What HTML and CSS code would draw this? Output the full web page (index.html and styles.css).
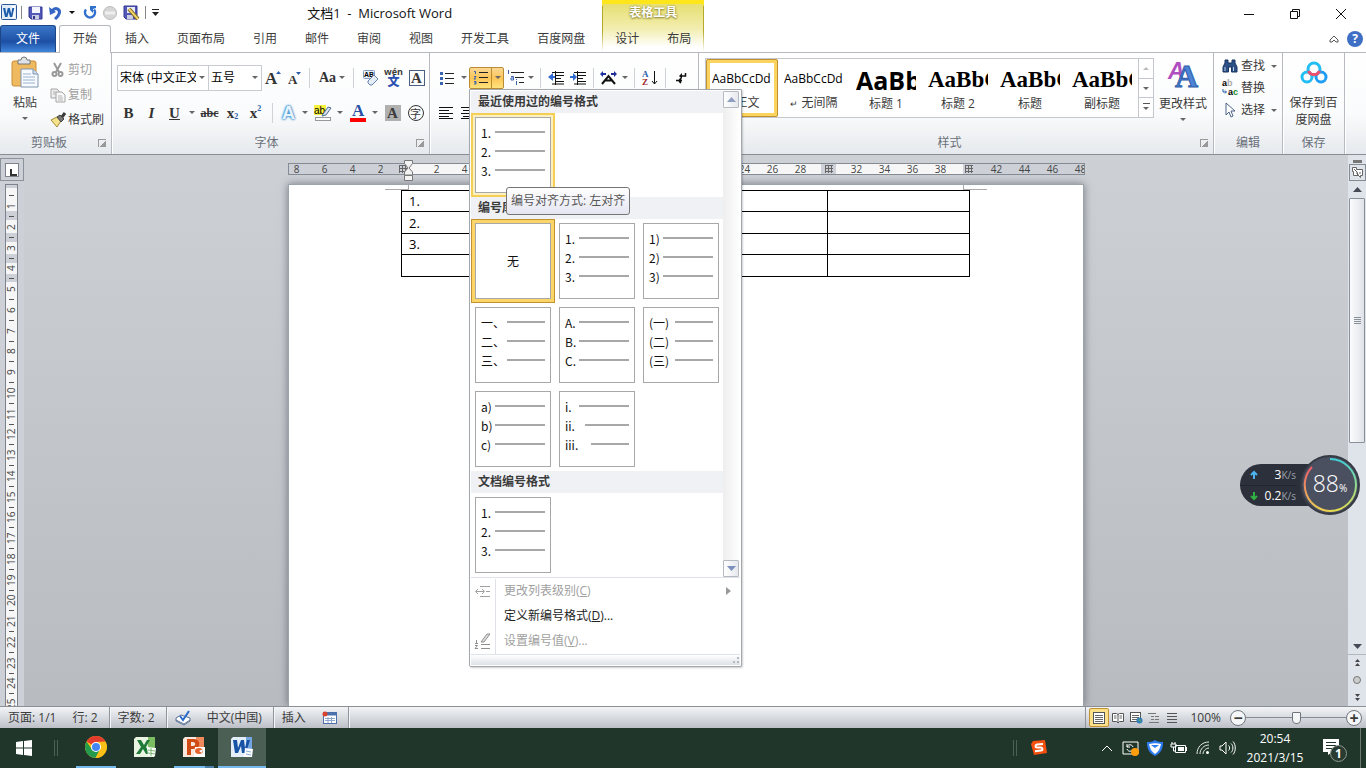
FILE: index.html
```html
<!DOCTYPE html>
<html lang="zh-CN">
<head>
    <meta charset="UTF-8">
    <meta name="viewport" content="width=device-width, initial-scale=1.0">
    <title>文档1 - Microsoft Word</title>
    <link rel="stylesheet" href="styles.css">
</head>

<body>
    <header class="header">
        <div class="quick-row">
            <div class="quick-access">
                <svg class="app-icon" width="17" height="17" viewBox="0 0 17 17"><rect x="0.5" y="0.5" width="15" height="15" rx="1" fill="#e3edf8" stroke="#2b579a"/><rect x="11" y="2" width="3" height="12" fill="#fff"/><path d="M2 4h2.300l1 6 1.500-6h2l1.500 6 1-6h2l-2 9h-2.300l-1.300-5-1.300 5H4z" fill="#1d5cab"/></svg>
                <span class="quick-sep"></span>
                <button class="quick" aria-label="保存"><svg width="16" height="16" viewBox="0 0 16 16"><path d="M1 2h13v12H3l-2-2z" fill="#5257b8" stroke="#33388f"/><rect x="4" y="2" width="8" height="6" fill="#f4f5fc"/><rect x="4" y="10" width="7" height="4" fill="#c9cbe0"/><rect x="5" y="11" width="2" height="3" fill="#33388f"/></svg></button>
                <button class="quick" aria-label="撤消"><svg width="16" height="16" viewBox="0 0 16 16"><path d="M4 6c4-5 9-1 7 3-1 3-3 4-4 5" fill="none" stroke="#3566c4" stroke-width="3"/><path d="M1 2l1 8 6-3z" fill="#3566c4"/></svg></button>
                <span class="caret dark"></span>
                <button class="quick redo" aria-label="恢复"><svg width="16" height="16" viewBox="0 0 16 16"><path d="M4 4.500a5 5 0 1 0 8 0" fill="none" stroke="#3270ce" stroke-width="2.500"/><path d="M8 1h6v2l-3 1v4L8 5z" fill="#3270ce"/></svg></button>
                <button class="quick" aria-label="状态"><svg width="16" height="16" viewBox="0 0 16 16"><circle cx="8" cy="8" r="6.500" fill="#d6d6d6" stroke="#bdbdbd"/><path d="M3 8h10" stroke="#efefef" stroke-width="3"/></svg></button>
                <button class="quick edit" aria-label="另存为"><svg width="18" height="16" viewBox="0 0 18 16"><path d="M1 1h13v13H3l-2-2z" fill="#5257b8" stroke="#33388f"/><rect x="4" y="2" width="8" height="6" fill="#e8eaf7"/><rect x="4" y="10" width="6" height="4" fill="#c9cbe0"/><path d="M6 4l9 10" stroke="#7b6520" stroke-width="4"/><path d="M6 4l9 10" stroke="#f0d264" stroke-width="2"/></svg></button>
                <span class="quick-sep"></span>
                <button class="quick more" aria-label="自定义快速访问工具栏"><svg width="9" height="8" viewBox="0 0 9 8"><path d="M1 .5h7" stroke="#222"/><path d="M1 3h7L4.500 7z" fill="#222"/></svg></button>
            </div>
            <h1 class="title">文档1&nbsp; -&nbsp; Microsoft Word</h1>
        </div>

        <nav class="tabs">
            <a class="file-tab" href="#">文件</a>
            <a class="tab active" href="#">开始</a>
            <a class="tab" href="#">插入</a>
            <a class="tab" href="#">页面布局</a>
            <a class="tab" href="#">引用</a>
            <a class="tab" href="#">邮件</a>
            <a class="tab" href="#">审阅</a>
            <a class="tab" href="#">视图</a>
            <a class="tab" href="#">开发工具</a>
            <a class="tab" href="#">百度网盘</a>
        </nav>

        <div class="context-tabs">
            <span class="context-title">表格工具</span>
            <div class="context-links">
                <a href="#">设计</a>
                <a href="#">布局</a>
            </div>
        </div>

        <div class="window-buttons">
            <button aria-label="最小化"><svg width="12" height="12" viewBox="0 0 12 12"><path d="M1 6.500h10" stroke="#111"/></svg></button>
            <button aria-label="还原"><svg width="12" height="12" viewBox="0 0 12 12"><path d="M1.500 3.500h7v7h-7zM3.500 3V1.500h7v7H9" fill="none" stroke="#111"/></svg></button>
            <button aria-label="关闭"><svg width="12" height="12" viewBox="0 0 12 12"><path d="M1 1l10 10M11 1L1 11" stroke="#111"/></svg></button>
        </div>
        <div class="help-row">
            <button aria-label="功能区最小化"><svg width="10" height="8" viewBox="0 0 10 8"><path d="M1 5l4-4 4 4v2H7L5 5 3 7H1z" fill="#fff" stroke="#555"/></svg></button>
            <button class="help" aria-label="帮助">?</button>
        </div>
    </header>

    <section class="ribbon">
        <div class="group clipboard">
            <div class="group-body">
                <button class="big">
                    <svg width="28" height="32" viewBox="0 0 28 32"><rect x="1" y="4" width="24" height="25" rx="2" fill="#efb95f" stroke="#c98f36"/><path d="M7 7V3h3a3 3 0 0 1 6 0h3v4z" fill="#dfe3e8" stroke="#777"/><path d="M10 12h12l5 5v13H10z" fill="#f7fbff" stroke="#7e94ae"/><path d="M22 12v5h5" fill="#cddcee" stroke="#7e94ae"/><path d="M12 17h8M12 20h12M12 23h12M12 26h12" stroke="#9db2cb"/></svg>
                    <span>粘贴</span>
                    <span class="caret"></span>
                </button>
                <div class="stack">
                    <button class="small" disabled><svg width="16" height="16" viewBox="0 0 16 16"><path d="M4 1l5 9M11 1L6 10" stroke="#9a9a9a" stroke-width="2"/><circle cx="4.500" cy="12" r="2" fill="none" stroke="#9a9a9a" stroke-width="2"/><circle cx="10.500" cy="12" r="2" fill="none" stroke="#9a9a9a" stroke-width="2"/></svg>剪切</button>
                    <button class="small" disabled><svg width="16" height="16" viewBox="0 0 16 16"><path d="M1 2h6l2 2v7H1z" fill="#eee" stroke="#a5a5a5"/><path d="M6 5h6l3 3v7H6z" fill="#f7f7f7" stroke="#a5a5a5"/><path d="M3 5h3M3 7h3M8 9h4M8 11h5M8 13h5" stroke="#b5b5b5"/></svg>复制</button>
                    <button class="small"><svg width="16" height="16" viewBox="0 0 16 16"><path d="M1 8l6-3 4 4-4 6z" fill="#f5e28a" stroke="#a38b35"/><path d="M7 5l3-2 4 4-3 3z" fill="#777" stroke="#444"/><path d="M12 5l3-4" stroke="#3b3b3b" stroke-width="3"/></svg>格式刷</button>
                </div>
            </div>
            <div class="group-label">剪贴板<i class="launcher"></i></div>
        </div>

        <div class="group font">
            <div class="group-body rows">
                <div class="tool-row">
                    <label class="combo name"><select aria-label="字体"><option>宋体 (中文正文)</option></select><span class="caret"></span></label>
                    <label class="combo size"><select aria-label="字号"><option>五号</option></select><span class="caret"></span></label>
                    <button class="tool narrow" aria-label="增大字体"><svg width="16" height="16" viewBox="0 0 16 16"><text x="0" y="14" class="glyph-lg">A</text><path d="M11 4h5l-2.500-3z" fill="#2a5caa"/></svg></button>
                    <button class="tool narrow" aria-label="缩小字体"><svg width="16" height="16" viewBox="0 0 16 16"><text x="2" y="14" class="glyph-sm">A</text><path d="M10 2h5l-2.500 3z" fill="#2a5caa"/></svg></button>
                    <span class="sep"></span>
                    <button class="tool narrow serif case" aria-label="更改大小写">Aa</button><span class="caret"></span>
                    <span class="sep"></span>
                    <button class="tool" aria-label="清除格式"><svg width="18" height="18" viewBox="0 0 18 18"><rect x="1.500" y="1.500" width="11" height="8" rx="1" fill="#e9f0fa" stroke="#7d9ac4"/><text x="2" y="8" class="glyph-xs">AB</text><path d="M6 12l6-6 4 4-6 6H8l-2-2z" fill="#e4ecf6" stroke="#6482ad"/></svg></button>
                    <button class="tool pinyin" aria-label="拼音指南"><span>wén</span><b>文</b></button>
                    <button class="tool" aria-label="字符边框"><span class="boxed">A</span></button>
                </div>
                <div class="tool-row">
                    <button class="tool serif" aria-label="加粗">B</button>
                    <button class="tool serif italic" aria-label="倾斜">I</button>
                    <button class="tool serif underline" aria-label="下划线">U</button><span class="caret"></span>
                    <button class="tool serif strike" aria-label="删除线">abc</button>
                    <button class="tool serif" aria-label="下标">x<sub>2</sub></button>
                    <button class="tool serif" aria-label="上标">x<sup>2</sup></button>
                    <span class="sep"></span>
                    <button class="tool narrow effects" aria-label="文本效果">A</button><span class="caret"></span>
                    <button class="tool" aria-label="突出显示"><svg width="18" height="18" viewBox="0 0 18 18"><rect x="0" y="1" width="12" height="10" fill="#f8f23c"/><text x="0" y="10" class="glyph-ab">ab</text><path d="M9 10l5-7 3 1-5 7-4 1z" fill="#d7e2f0" stroke="#4e6a91"/><rect x="1.500" y="13.500" width="15" height="3" fill="#fff" stroke="#999"/></svg></button><span class="caret"></span>
                    <button class="tool" aria-label="字体颜色"><svg width="18" height="18" viewBox="0 0 18 18"><text x="3" y="12" class="glyph-blue">A</text><rect x="1" y="14" width="16" height="4" fill="#f00"/></svg></button><span class="caret"></span>
                    <button class="tool" aria-label="字符底纹"><span class="shaded">A</span></button>
                    <button class="tool" aria-label="带圈字符"><span class="circled">字</span></button>
                </div>
            </div>
            <div class="group-label">字体<i class="launcher"></i></div>
        </div>

        <div class="group paragraph">
            <div class="group-body rows">
                <div class="tool-row">
                    <button class="tool bullets" aria-label="项目符号"><svg width="14" height="14" viewBox="0 0 14 14"><path d="M0 1h3v3H0zM0 6h3v3H0zM0 11h3v3H0z" fill="#3a64b0"/><path d="M5 2.500h9M5 7.500h9M5 12.500h9" stroke="#222"/></svg></button><span class="caret"></span>
                    <div class="split">
                        <button class="split-main" aria-label="编号"><svg width="15" height="15" viewBox="0 0 15 15"><path d="M1 1.500h1.500V4M1 6.500h2L1 9h2M1 11.500h2V14H1M1.500 12.800H3" fill="none" stroke="#3a64b0"/><path d="M6 2.500h9M6 7.500h9M6 12.500h9" stroke="#222"/></svg></button>
                        <button class="split-arrow" aria-label="编号选项" aria-expanded="true"><span class="caret"></span></button>

                        <div class="menu">
                            <div class="menu-scroll">
                                <div class="gallery">
                                    <h2>最近使用过的编号格式</h2>
                                    <div class="cells">
                                        <div class="cell-wrap">
                                            <button class="cell hover"><span>1.</span><span>2.</span><span>3.</span></button>
                                            <div class="tooltip" role="tooltip">编号对齐方式: 左对齐</div>
                                        </div>
                                    </div>
                                    <h2>编号库</h2>
                                    <div class="cells">
                                        <button class="cell none">无</button>
                                        <button class="cell"><span>1.</span><span>2.</span><span>3.</span></button>
                                        <button class="cell"><span>1)</span><span>2)</span><span>3)</span></button>
                                        <button class="cell wide"><span>一、</span><span>二、</span><span>三、</span></button>
                                        <button class="cell"><span>A.</span><span>B.</span><span>C.</span></button>
                                        <button class="cell wide"><span>(一)</span><span>(二)</span><span>(三)</span></button>
                                        <button class="cell"><span>a)</span><span>b)</span><span>c)</span></button>
                                        <button class="cell roman"><span>i.</span><span>ii.</span><span>iii.</span></button>
                                    </div>
                                    <h2>文档编号格式</h2>
                                    <div class="cells">
                                        <button class="cell"><span>1.</span><span>2.</span><span>3.</span></button>
                                    </div>
                                </div>
                                <div class="menu-bar">
                                    <button aria-label="向上滚动"><svg width="9" height="5" viewBox="0 0 9 5"><path d="M0 5h9L4.500 0z" fill="#8f9dc0"/></svg></button>
                                    <button aria-label="向下滚动"><svg width="9" height="5" viewBox="0 0 9 5"><path d="M0 0h9L4.500 5z" fill="#7d8fbd"/></svg></button>
                                </div>
                            </div>
                            <div class="commands">
                                <button disabled><i><svg width="16" height="12" viewBox="0 0 16 12"><path d="M5 1.500h10M11 6.500h4M5 11.500h10M1 6.500h8M3 4L0.500 6.500 3 9M7 4l2.500 2.500L7 9" fill="none" stroke="#a0a0a0"/></svg></i>更改列表级别(<u>C</u>)<svg class="submenu" width="5" height="8" viewBox="0 0 5 8"><path d="M0 0v8l5-4z" fill="#999"/></svg></button>
                                <button><i></i>定义新编号格式(<u>D</u>)...</button>
                                <button disabled><i><svg width="16" height="16" viewBox="0 0 16 16"><path d="M1.500 7v3M0 10.500h3M0 12.500h2.500L0 15.500h3M6 11.500h9M6 15.500h9" fill="none" stroke="#909090"/><path d="M6 9l6-8h3L9 9z" fill="#ddd" stroke="#909090"/></svg></i>设置编号值(<u>V</u>)...</button>
                            </div>
                            <div class="grip"><svg width="8" height="8" viewBox="0 0 8 8"><path d="M5 1h2v2H5zM1 5h2v2H1zM5 5h2v2H5z" fill="#b5bac2"/></svg></div>
                        </div>
                    </div>
                    <button class="tool multi" aria-label="多级列表"><svg width="17" height="15" viewBox="0 0 17 15"><path d="M1.500 0v4M4 6.500h2.500V10H4V8h2M9.500 11v4M9.500 9v1" fill="none" stroke="#3a64b0"/><path d="M4 2.500h13M8 7.500h9M12 12.500h5" stroke="#222"/></svg></button><span class="caret"></span>
                    <span class="sep"></span>
                    <button class="tool" aria-label="减少缩进量"><svg width="16" height="14" viewBox="0 0 16 14"><path d="M4 1.500h12M7 4.500h9M7 7.500h6M7 10.500h9M4 13h12M7.500 0v14" stroke="#111"/><path d="M0 6l5-4v3h2v2H5v3z" fill="#2f6bd0"/></svg></button>
                    <button class="tool" aria-label="增加缩进量"><svg width="16" height="14" viewBox="0 0 16 14"><path d="M4 1.500h12M7 4.500h9M7 7.500h6M7 10.500h9M4 13h12M7.500 0v14" stroke="#111"/><path d="M7 6L3 2v3H0v2h3v3z" fill="#2f6bd0"/></svg></button>
                    <span class="sep"></span>
                    <button class="tool" aria-label="中文版式"><svg width="18" height="14" viewBox="0 0 18 14"><path d="M2 13l6.500-8L15 13M5 9.500h7" fill="none" stroke="#111" stroke-width="2"/><path d="M0 3l3-3v2h3v2H3v2zM17 3l-3-3v2h-3v2h3v2z" fill="#1c2f9a"/></svg></button><span class="caret"></span>
                    <span class="sep"></span>
                    <button class="tool" aria-label="排序"><svg width="16" height="16" viewBox="0 0 16 16"><text x="0" y="7" class="glyph-sort a">A</text><text x="0" y="15" class="glyph-sort z">Z</text><path d="M12.500 1v13M10 11l2.500 3 2.500-3" fill="none" stroke="#111"/></svg></button>
                    <span class="sep"></span>
                    <button class="tool" aria-label="显示编辑标记"><svg width="12" height="14" viewBox="0 0 12 14"><path d="M10.500 2v3H6M1 9.500h6M5.500 7v5" fill="none" stroke="#111" stroke-width="1.500"/><path d="M4 5l3-3v6zM3 9.500L5.500 7v6z" fill="#111"/></svg></button>
                </div>
                <div class="tool-row">
                    <button class="tool" aria-label="左对齐"><svg width="14" height="12" viewBox="0 0 14 12"><path d="M0 .5h14M0 3.500h10M0 6.500h14M0 9.500h10M0 11.500h14" stroke="#111"/></svg></button>
                    <button class="tool" aria-label="居中"><svg width="14" height="12" viewBox="0 0 14 12"><path d="M0 .5h14M2 3.500h10M0 6.500h14M2 9.500h10M0 11.500h14" stroke="#111"/></svg></button>
                </div>
            </div>
            <div class="group-label"></div>
        </div>

        <div class="group styles">
            <div class="group-body">
                <div class="style-gallery">
                    <button class="style selected"><span class="preview">AaBbCcDd</span><span><small>↵</small> 正文</span></button>
                    <button class="style"><span class="preview">AaBbCcDd</span><span><small>↵</small> 无间隔</span></button>
                    <button class="style"><span class="preview heading1">AaBb</span><span>标题 1</span></button>
                    <button class="style"><span class="preview heading">AaBbC</span><span>标题 2</span></button>
                    <button class="style"><span class="preview heading">AaBbC</span><span>标题</span></button>
                    <button class="style"><span class="preview heading">AaBbC</span><span>副标题</span></button>
                    <div class="style-scroll">
                        <button disabled aria-label="上一行"><span class="caret up"></span></button>
                        <button aria-label="下一行"><span class="caret"></span></button>
                        <button class="all" aria-label="其他"><span class="caret"></span></button>
                    </div>
                </div>
                <button class="big">
                    <svg width="30" height="32" viewBox="0 0 30 32"><text x="0" y="21" class="glyph-purple">A</text><text x="7" y="29" class="glyph-styles">A</text></svg>
                    <span>更改样式</span>
                    <span class="caret"></span>
                </button>
            </div>
            <div class="group-label">样式<i class="launcher"></i></div>
        </div>

        <div class="group editing">
            <div class="group-body">
                <div class="stack">
                    <button class="small"><svg width="16" height="14" viewBox="0 0 16 14"><path d="M3 1h3v3h4V1h3v3l2 4v5H9.500V8h-3v5H1V8l2-4z" fill="#2d5187" stroke="#19345f"/><path d="M3 8v4M11.500 8v4" stroke="#b5cae8"/></svg>查找<span class="caret"></span></button>
                    <button class="small"><svg width="16" height="16" viewBox="0 0 16 16"><text x="0" y="6" class="glyph-rep">a<tspan class="pale">b</tspan></text><text x="6" y="15" class="glyph-rep">a<tspan class="green">c</tspan></text><path d="M1 9v3h3M3 10.500l1.500 1.500L3 13.500" fill="none" stroke="#2a5caa"/></svg>替换</button>
                    <button class="small"><svg width="16" height="16" viewBox="0 0 16 16"><path d="M4 1v12l3-3 2 5 2-1-2-5h4z" fill="#fff" stroke="#4c6388"/></svg>选择<span class="caret"></span></button>
                </div>
            </div>
            <div class="group-label">编辑</div>
        </div>

        <div class="group cloud">
            <div class="group-body">
                <button class="big">
                    <svg width="28" height="32" viewBox="0 0 28 32"><circle cx="14" cy="12" r="6" fill="none" stroke="#22bdf2" stroke-width="3"/><circle cx="7" cy="20" r="5" fill="none" stroke="#22bdf2" stroke-width="3"/><circle cx="21" cy="20" r="5" fill="none" stroke="#1e9df2" stroke-width="3"/><path d="M8.500 14a6 6 0 0 0 11 0" fill="none" stroke="#f0506e" stroke-width="3"/></svg>
                    <span>保存到百<br>度网盘</span>
                </button>
            </div>
            <div class="group-label">保存</div>
        </div>
    </section>

    <main class="workspace">
        <div class="left-rail">
            <button class="tab-stop" aria-label="制表符"><span></span></button>
            <div class="v-ruler">
                <span>1</span><span>2</span><span>3</span><span>4</span><span>5</span><span>6</span><span>7</span><span>8</span><span>9</span><span>10</span><span>11</span><span>12</span><span>13</span><span>14</span><span>15</span><span>16</span><span>17</span><span>18</span><span>19</span><span>20</span><span>21</span><span>22</span><span>23</span><span>24</span><span>25</span>
            </div>
        </div>

        <div class="canvas">
            <div class="h-ruler-wrap">
                <div class="h-ruler">
                    <span>8</span><span>6</span><span>4</span><span>2</span><span class="mark"></span><span>2</span><span>4</span><span>6</span><span>8</span><span>10</span><span>12</span><span>14</span><span>16</span><span>18</span><span>20</span><span>22</span><span>24</span><span>26</span><span>28</span><span class="mark"></span><span>32</span><span>34</span><span>36</span><span>38</span><span class="mark"></span><span>42</span><span>44</span><span>46</span><span>48</span>
                </div>
                <svg class="indent" width="9" height="21" viewBox="0 0 9 21"><path d="M.5.5h8v3L5 8l3.500 4v3h-8v-3L4 8 .5 3.500zM.5 15.500h8v5h-8z" fill="#f3f3f3" stroke="#777"/></svg>
            </div>
            <div class="page">
                <div class="crop-marks"><span></span><span></span></div>
                <table class="doc-table">
                    <tr><td>1.</td><td></td><td></td><td></td></tr>
                    <tr><td>2.</td><td></td><td></td><td></td></tr>
                    <tr><td>3.</td><td></td><td></td><td></td></tr>
                    <tr><td></td><td></td><td></td><td></td></tr>
                </table>
            </div>
        </div>

        <div class="right-rail">
            <span class="splitter"></span>
            <button class="ruler-toggle" aria-label="标尺"><svg width="13" height="13" viewBox="0 0 13 13"><path d="M1.500 1.500h4v2h6v6h-2v2l-2-2h-5v-4h-1z" fill="#fff" stroke="#666"/><path d="M3 3l3 3M6 6v2l2 2M9 6v2" stroke="#666"/></svg></button>
            <button class="scroll-up" aria-label="向上"><svg width="9" height="5" viewBox="0 0 9 5"><path d="M0 5h9L4.500 0z" fill="#444a55"/></svg></button>
            <div class="scroll-track"><div class="scroll-thumb"></div></div>
            <button aria-label="向下"><svg width="9" height="5" viewBox="0 0 9 5"><path d="M0 0h9L4.500 5z" fill="#444a55"/></svg></button>
            <div class="browse">
                <button aria-label="上一页"><svg width="7" height="8" viewBox="0 0 7 8"><path d="M1 3h5L3.500 0zM1 7h5L3.500 4z" fill="#444"/></svg></button>
                <button aria-label="选择浏览对象"><svg width="8" height="8" viewBox="0 0 8 8"><circle cx="4" cy="4" r="3.500" fill="#ccc" stroke="#777"/></svg></button>
                <button aria-label="下一页"><svg width="7" height="8" viewBox="0 0 7 8"><path d="M1 1h5L3.500 4zM1 5h5L3.500 8z" fill="#444"/></svg></button>
            </div>
        </div>

        <!-- network / memory monitor floating over the document -->
        <div class="monitor">
            <div class="speeds">
                <p><svg width="8" height="8" viewBox="0 0 8 8"><path d="M4 8V2M1 4l3-3 3 3" fill="none" stroke="#4db4f0" stroke-width="2"/></svg><b>3</b>K/s</p>
                <p><svg width="8" height="8" viewBox="0 0 8 8"><path d="M4 0v6M1 4l3 3 3-3" fill="none" stroke="#31b043" stroke-width="2"/></svg><b>0.2</b>K/s</p>
            </div>
            <div class="gauge">
                <svg width="60" height="60" viewBox="0 0 60 60">
                    <defs><linearGradient id="ring" x1="0" y1="0" x2="0" y2="1"><stop offset="0" stop-color="#3fd0d8"/><stop offset="0.500" stop-color="#8fdc90"/><stop offset="1" stop-color="#e6dc50"/></linearGradient><linearGradient id="warm" x1="0" y1="0" x2="0" y2="1"><stop offset="0" stop-color="#ee5a6c"/><stop offset="1" stop-color="#ecd14f"/></linearGradient></defs>
                    <circle cx="30" cy="30" r="29" fill="#4b5060" stroke="#363a45" stroke-width="2"/>
                    <path d="M30 4a26 26 0 0 1 0 52" fill="none" stroke="url(#ring)" stroke-width="2"/>
                    <path d="M30 56A26 26 0 0 1 12 12" fill="none" stroke="url(#warm)" stroke-width="2"/>
                </svg>
                <span>88<small>%</small></span>
            </div>
        </div>
    </main>

    <footer class="status-bar">
        <span class="status">页面: 1/1</span>
        <span class="status end">行: 2</span>
        <span class="status end">字数: 2</span>
        <span class="status"><svg width="16" height="16" viewBox="0 0 16 16"><path d="M1 8l5-3 9 3v3l-6 4-8-4z" fill="#fff" stroke="#5c7396"/><path d="M1 10l8 4 6-4" fill="none" stroke="#5c7396"/><path d="M5 6l3 4 6-9" fill="none" stroke="#2b6acb" stroke-width="2"/></svg></span>
        <span class="status end">中文(中国)</span>
        <span class="status">插入</span>
        <span class="status end"><svg width="15" height="13" viewBox="0 0 15 13"><rect x="1.500" y="1.500" width="13" height="11" fill="#fff" stroke="#4b70ab"/><path d="M2 3h12" stroke="#4b70ab" stroke-width="3"/><path d="M3 7.500h10M3 9.500h10M6 6v6M9.500 6v6" stroke="#8ca6cf"/><circle cx="3" cy="3" r="2.500" fill="#d8432e"/></svg></span>
        <div class="views">
            <button class="current" aria-label="页面视图"><svg width="12" height="12" viewBox="0 0 12 12"><rect x=".5" y=".5" width="11" height="11" fill="#fff" stroke="#555"/><path d="M2 3.500h8M2 5.500h8M2 7.500h8M2 9.500h8" stroke="#666"/></svg></button>
            <button aria-label="阅读版式"><svg width="12" height="12" viewBox="0 0 12 12"><path d="M.5 1.500h4l1.500 1 1.500-1h4v8h-4L6 11 4.500 9.500h-4zM6 2v9" fill="#fff" stroke="#555"/><path d="M2 4h2.500M2 6h2.500M7.500 4H10M7.500 6H10" stroke="#666"/></svg></button>
            <button aria-label="Web 版式"><svg width="13" height="12" viewBox="0 0 13 12"><rect x=".5" y=".5" width="10" height="9" fill="#fff" stroke="#555"/><path d="M2 3.500h7M2 5.500h7M2 7.500h5" stroke="#666"/><circle cx="9.500" cy="8.500" r="3" fill="#2f7db8"/><path d="M8 8l2-1 1 3z" fill="#59b35a"/></svg></button>
            <button aria-label="大纲视图"><svg width="12" height="12" viewBox="0 0 12 12"><path d="M0 1.500h8M3 4.500h3M7 4.500h4M3 7.500h3M7 7.500h4M1 10.500h10" stroke="#777"/></svg></button>
            <button aria-label="草稿"><svg width="12" height="12" viewBox="0 0 12 12"><path d="M1 1.500h10M1 4.500h10M1 7.500h10M1 10.500h10" stroke="#555"/></svg></button>
        </div>
        <div class="zoom">
            <span>100%</span>
            <button aria-label="缩小">−</button>
            <input type="range" aria-label="显示比例" min="0" max="100" value="50">
            <button aria-label="放大">+</button>
        </div>
    </footer>

    <footer class="taskbar">
        <button class="start" aria-label="开始"><svg width="16" height="16" viewBox="0 0 16 16"><path d="M0 2l7-1v6.500H0zM8 1l8-1v7.500H8zM0 8.500h7V15l-7-1zM8 8.500h8V16l-8-1z" fill="#fff"/></svg></button>
        <span class="rule"></span>
        <div class="apps">
            <button class="app running" aria-label="Chrome"><svg width="22" height="22" viewBox="0 0 22 22"><circle cx="11" cy="11" r="11" fill="#fbc116"/><path d="M11 11L1.500 5.500A11 11 0 0 1 20.500 5.500L11 6z" fill="#e33b2e"/><path d="M1.500 5.500A11 11 0 0 0 10.500 22L15 13.500H7z" fill="#249a4c"/><path d="M11 6h9.500a11 11 0 0 1-10 16L15.500 13z" fill="#fbc116"/><circle cx="11" cy="11" r="5" fill="#fff"/><circle cx="11" cy="11" r="4" fill="#4285f4"/></svg></button>
            <button class="app" aria-label="Excel"><svg width="22" height="22" viewBox="0 0 22 22"><path d="M2 1h19v19l-1 1H0V3z" fill="#e9f4e3"/><path d="M14 1h7v13h-7z" fill="#7bbd62"/><path d="M3 4h4l3 5 3-5h3l-4 7 4 7h-4l-3-5-3 5H2l5-7z" fill="#207a38"/><path d="M13 11l9 1-1 8h-7z" fill="#fff"/><path d="M14 14l7 1M14 17l7 1M17 12v8" stroke="#78b86c"/></svg></button>
            <button class="app running recent" aria-label="PowerPoint"><svg width="22" height="22" viewBox="0 0 22 22"><path d="M2 1h19v19l-1 1H0V3z" fill="#fbe7dc"/><path d="M13 1h8v13h-8z" fill="#ee8a5c"/><path d="M4 3h7c7 0 7 10 0 10H8v6H4zM8 6v4h2c3 0 3-4 0-4z" fill="#d04a13" fill-rule="evenodd"/><path d="M12 11h10v10H11z" fill="#fff"/><ellipse cx="16" cy="15" rx="4" ry="3" fill="#e4622c"/><path d="M16 15l4-2-1 4z" fill="#fff"/></svg></button>
            <button class="app running active" aria-label="Word"><svg width="22" height="22" viewBox="0 0 22 22"><path d="M2 1h19v19l-1 1H0V3z" fill="#e4eefa"/><path d="M15 1h6v12h-6z" fill="#73a5e0"/><path d="M2 4h4l1 8 3-8h3l1 8 2-8h3l-4 13h-4l-1-7-3 7H4z" fill="#1753a5"/><path d="M14 12l8 1-1 8h-8z" fill="#fff"/><path d="M15 15l5 1M15 18l5 1" stroke="#86acdb"/></svg></button>
        </div>
        <div class="tray">
            <span class="rule"></span>
            <button class="ime" aria-label="搜狗输入法"><svg width="16" height="16" viewBox="0 0 16 16"><path d="M2 1l12-1 2 13-13 2L0 4z" fill="#f4500d"/><path d="M12 4L6 4.500c-2 .5-2 3 0 3h4c2 .5 2 3 0 3l-6 .8" fill="none" stroke="#fff" stroke-width="2"/></svg></button>
            <button aria-label="显示隐藏的图标"><svg width="12" height="8" viewBox="0 0 12 8"><path d="M1 7l5-5 5 5" fill="none" stroke="#fff"/></svg></button>
            <button aria-label="同步"><svg width="18" height="16" viewBox="0 0 18 16"><path d="M1 2h15v12H1zM5 7c1-3 5-3 6 0M5 4v3h3M11 9c-1 3-5 3-6 0" fill="none" stroke="#fff"/><circle cx="13" cy="12" r="4" fill="#ff9d0a"/></svg></button>
            <button aria-label="电脑管家"><svg width="16" height="16" viewBox="0 0 16 16"><path d="M8 0c3 2 5 2 8 2 0 7-2 11-8 14C2 13 0 9 0 2c3 0 5 0 8-2z" fill="#2d7cf0"/><path d="M2 4c5-1 8-1 12 0-1 5-3 8-6 10-3-2-5-5-6-10z" fill="#fff"/><path d="M4 5h8L8 8z" fill="#2d7cf0"/></svg></button>
            <button aria-label="电池"><svg width="18" height="12" viewBox="0 0 18 12"><path d="M5.500 3.500h10v7h-10zM16.500 5v4M1 2h5v3H1zM3.500 5v4h2M2 0v2M5 0v2" fill="none" stroke="#fff"/><rect x="8" y="5" width="6" height="4" fill="#fff"/></svg></button>
            <button aria-label="无线网络"><svg width="14" height="14" viewBox="0 0 14 14"><path d="M1 13C1 6 6 1 13 1M4 13c0-5 4-9 9-9M7 13c0-3 3-6 6-6" fill="none" stroke="#e6ebe8"/><circle cx="11.500" cy="11.500" r="1.500" fill="#fff"/></svg></button>
            <button aria-label="音量"><svg width="17" height="14" viewBox="0 0 17 14"><path d="M1 5h2l4-4v12L3 9H1zM9.500 4.500c1.500 1 1.500 4 0 5M12 2.500c2.500 2 2.500 7 0 9M14 .5c3 3 3 10 0 13" fill="none" stroke="#fff"/></svg></button>
            <time>20:54<br>2021/3/15</time>
            <button class="notice" aria-label="通知"><svg width="24" height="24" viewBox="0 0 24 24"><path d="M0 1h16v13H9l-4 3v-3H0z" fill="#fff"/><path d="M3 4.500h10M3 7.500h10M3 10.500h7" stroke="#20362a"/><circle cx="15.500" cy="15.500" r="8" fill="#293b31" stroke="#8d9992"/><text x="12" y="20" class="badge">1</text></svg></button>
        </div>
    </footer>
</body>
</html>
```

FILE: styles.css
```css
* {
    box-sizing: border-box;
}
body {
    margin: 0;
    height: 100vh;
    display: flex;
    flex-direction: column;
    overflow: hidden;
    font-family: "Open Sans", "Noto Sans CJK SC", sans-serif;
    font-size: 12px;
    line-height: 16px;
    color: #3b3b3b;
    background: #fff;
}
button {
    display: flex;
    align-items: center;
    justify-content: center;
    padding: 0;
    border: 0;
    background: none;
    font: inherit;
    color: inherit;
}
a {
    color: inherit;
    text-decoration: none;
}
svg {
    display: block;
    flex: none;
    overflow: visible;
}

/* small drop-down arrow */
.caret {
    flex: none;
    width: 12px;
}
.caret::before {
    content: "";
    display: block;
    width: 0;
    margin: 0 auto;
    border: 3px solid transparent;
    border-top-color: #666;
    border-bottom: 0;
}
.caret.dark::before {
    border-top-color: #111;
}
.caret.up::before {
    border-top: 0;
    border-bottom: 3px solid #bbb;
}

/* title bar and tabs */
.header {
    display: grid;
    grid-template-columns: auto auto 1fr;
    grid-template-rows: 25px 27px;
    border-bottom: 1px solid #b6babf;
}
.quick-row {
    grid-area: 1 / 1;
    display: flex;
    justify-content: space-between;
    align-items: center;
    padding-right: 150px;
}
.quick-access {
    display: flex;
    align-items: center;
    padding-left: 1px;
}
.quick-sep {
    height: 13px;
    margin: 0 4px 0 3px;
    border-left: 1px solid #888;
}
.quick {
    width: 20px;
}
.redo,
.edit {
    margin-left: 2px;
}
.more {
    width: 10px;
}
.title {
    margin: 0;
    font-size: 13px;
    font-weight: normal;
    color: #111;
}
.tabs {
    grid-area: 2 / 1;
    display: flex;
    padding-right: 3px;
}
.file-tab {
    width: 56px;
    margin-right: 3px;
    text-align: center;
    line-height: 26px;
    color: #fff;
    background: linear-gradient(#3b76c8, #1d50a5 60%, #3f86dc);
    border: 1px solid #1c4687;
    border-bottom: 0;
    border-radius: 3px 3px 0 0;
}
.tab {
    padding: 0 14px;
    line-height: 28px;
}
.tab.active {
    margin-bottom: -1px;
    padding: 0 13px;
    line-height: 26px;
    background: #fff;
    border: 1px solid #b6babf;
    border-bottom: 0;
    border-radius: 3px 3px 0 0;
}
.context-tabs {
    grid-area: 1 / 2 / 3;
    padding: 0 12px;
    border: 1px solid #c9bd2c;
    border-width: 4px 1px 0;
    border-image: linear-gradient(#ffe61a 10%, #b5a92c 12%, #b5a92c 60%, #fff) 4 1 0;
    background: linear-gradient(#e6df72, #f2edad 50%, #fff 90%);
}
.context-title {
    display: block;
    text-align: center;
    line-height: 18px;
    font-weight: bold;
    color: #fff;
    text-shadow: 0 0 2px #8d8430, 0 1px 2px #8d8430;
}
.context-links {
    display: flex;
    gap: 28px;
    line-height: 34px;
}
.window-buttons {
    grid-area: 1 / 3;
    display: flex;
    justify-content: flex-end;
    align-items: center;
    padding: 3px 2px 0 0;
}
.window-buttons button {
    width: 46px;
}
.help-row {
    grid-area: 2 / 3;
    display: flex;
    justify-content: flex-end;
    align-items: center;
    gap: 8px;
    padding-right: 3px;
}
.help {
    width: 16px;
    height: 16px;
    border-radius: 50%;
    background: #3f6fc4;
    color: #fff;
    font-weight: bold;
}

/* ribbon */
.ribbon {
    display: flex;
    height: 102px;
    background: linear-gradient(#fff, #fafbfc 60%, #e6e9ed);
    border-bottom: 1px solid #898e95;
}
.group {
    display: flex;
    flex-direction: column;
    border-right: 1px solid #b7bbc1;
    box-shadow: 1px 0 #fff;
}
.group-body {
    flex: 1;
    display: flex;
    align-items: flex-start;
}
.group-label {
    display: flex;
    justify-content: center;
    height: 19px;
    color: #6a707a;
}
.launcher {
    width: 8px;
    height: 8px;
    margin: 4px 5px 0 auto;
    border: 1px solid #999;
    border-width: 1px 0 0 1px;
    background: linear-gradient(135deg, transparent 50%, #999 50%);
}
.group-label:has(.launcher)::before {
    content: "";
    margin-left: auto;
}
.big {
    flex-direction: column;
    justify-content: flex-start;
    padding-top: 4px;
    line-height: 17px;
}
.big span:nth-child(2) {
    padding-top: 5px;
}
.big .caret {
    margin-top: 6px;
}
.stack {
    display: flex;
    flex-direction: column;
}
.small {
    height: 25px;
    gap: 2px;
    justify-content: flex-start;
}
.small:disabled {
    color: #a0a0a0;
}
.clipboard {
    width: 112px;
}
.clipboard .big {
    width: 50px;
}
.clipboard .stack {
    padding-top: 4px;
}
.rows {
    flex-direction: column;
}
.tool-row {
    display: flex;
    align-items: center;
    height: 35px;
    margin-top: 7px;
}
.tool-row + .tool-row {
    margin-top: 0;
}
.combo {
    display: flex;
    align-items: center;
    height: 26px;
    border: 1px solid #c8cbd0;
    background: #fff;
}
.combo.name {
    width: 92px;
}
.combo.size {
    width: 54px;
    margin-left: -1px;
}
.combo select {
    flex: 1;
    min-width: 0;
    padding: 0 0 0 2px;
    border: 0;
    appearance: none;
    background: none;
    font: inherit;
    color: #000;
}
.tool {
    width: 23px;
    height: 22px;
}
.tool.narrow {
    width: 21px;
}
.sep {
    height: 20px;
    margin: 0 5px;
    border-left: 1px solid #cfd3d8;
}
.serif {
    font-family: "Liberation Serif", serif;
    font-size: 15px;
    font-weight: bold;
    color: #333;
}
.case {
    padding-left: 4px;
    font-size: 14px;
}
.italic {
    font-style: italic;
}
.underline {
    text-decoration: underline;
}
.strike {
    font-size: 12px;
    text-decoration: line-through;
}
.serif sub,
.serif sup {
    font-size: 8px;
    color: #2a5caa;
}
.serif sub {
    padding-top: 8px;
}
.serif sup {
    padding-bottom: 8px;
}
.pinyin {
    flex-direction: column;
    line-height: 8px;
    font-size: 9px;
    font-weight: bold;
}
.pinyin b {
    font-size: 12px;
    line-height: 12px;
    color: #2a50b0;
}
.boxed,
.shaded,
.circled {
    width: 16px;
    height: 16px;
    text-align: center;
    font-family: "Liberation Serif", serif;
    font-size: 15px;
    font-weight: bold;
    line-height: 16px;
}
.boxed {
    border: 1px solid #4a5f82;
    line-height: 14px;
}
.shaded {
    background: #b0b0b0;
}
.circled {
    border: 1px solid #333;
    border-radius: 50%;
    font: 11px/14px "Noto Sans CJK SC", sans-serif;
}
.effects {
    font-family: "Liberation Sans", sans-serif;
    font-size: 18px;
    font-weight: bold;
    color: #e8f4fc;
    text-shadow: 0 0 2px #3d8fd0, 0 0 2px #3d8fd0, 0 0 3px #3d8fd0;
}
.glyph-lg,
.glyph-sm,
.glyph-blue,
.glyph-sort,
.glyph-styles {
    font-family: "Liberation Serif", serif;
    font-weight: bold;
    font-size: 17px;
    fill: #333;
}
.glyph-sm {
    font-size: 13px;
}
.glyph-xs {
    font: bold 7px "Liberation Sans", sans-serif;
}
.glyph-ab {
    font: 10px "Liberation Sans", sans-serif;
}
.glyph-rep {
    font: bold 9px "Liberation Sans", sans-serif;
}
.glyph-rep .pale {
    fill: #aaa;
}
.glyph-rep .green {
    fill: #1c8a2c;
}
.glyph-blue {
    fill: #2a50a5;
}
.glyph-sort {
    font-size: 9px;
}
.glyph-sort.a {
    fill: #2a5caa;
}
.glyph-sort.z {
    fill: #a02828;
}
.glyph-purple {
    font: italic bold 23px "Liberation Sans", sans-serif;
    fill: #b04fc0;
}
.glyph-styles {
    font-size: 32px;
    fill: #4d83d6;
    stroke: #2c5ba8;
}
.font {
    width: 318px;
    padding-left: 5px;
}

/* paragraph group with the numbering menu */
.paragraph {
    width: 269px;
    padding-left: 5px;
}
.paragraph .tool {
    width: 22px;
}
.paragraph .tool.bullets {
    width: 24px;
}
.paragraph .sep {
    margin: 0 4px;
}
.paragraph .caret {
    width: 10px;
}
.split {
    position: relative;
    display: flex;
    height: 22px;
    border: 1px solid #b98c34;
    border-radius: 2px;
    background: linear-gradient(#fbd793, #fdc557 50%, #ffe37c);
}
.split-main {
    width: 21px;
}
.split-arrow {
    width: 12px;
    border-left: 1px solid #b98c34;
}
.paragraph .tool.multi {
    width: 22px;
}
.menu {
    position: absolute;
    z-index: 5;
    top: 21px;
    left: -1px;
    width: 273px;
    padding: 1px;
    border: 1px solid #a3a8af;
    border-radius: 0 0 2px 2px;
    background: #fff;
    box-shadow: 1px 1px 2px rgba(0, 0, 0, 0.200);
}
.menu-scroll {
    display: flex;
    border-bottom: 1px solid #dfe2e6;
}
.gallery {
    flex: 1;
}
.gallery h2 {
    margin: 0;
    padding-left: 7px;
    font-size: 12px;
    line-height: 22px;
    background: #eff1f5;
}
.cells {
    display: grid;
    grid-template-columns: repeat(3, 76px);
    gap: 8px;
    padding: 4px;
}
.cell-wrap {
    position: relative;
}
.cell {
    width: 76px;
    height: 76px;
    flex-direction: column;
    align-items: stretch;
    justify-content: flex-start;
    padding: 5px;
    border: 1px solid #a8a8a8;
    background: #fff;
    font-family: "Noto Sans CJK SC", sans-serif;
    line-height: 19px;
    color: #111;
}
.cell span {
    display: flex;
    align-items: center;
    height: 19px;
    line-height: 17px;
    text-align: left;
}
.cell span::before {
    content: "";
    order: 1;
    width: 50px;
    height: 2px;
    margin-left: auto;
    background: #a8a8a8;
}
.cell.wide span::before {
    width: 38px;
}
.cell.roman span:nth-child(2)::before {
    width: 44px;
}
.cell.roman span:nth-child(3)::before {
    width: 38px;
}
.cell.none {
    align-items: center;
    justify-content: center;
    box-shadow: 0 0 0 3px #fcd568, 0 0 0 4px #c29232;
}
.cell.hover {
    box-shadow: 0 0 0 2px #fdf0c0, 0 0 0 4px #f5cf55;
}
.tooltip {
    position: absolute;
    z-index: 2;
    top: 70px;
    left: 31px;
    padding: 5px 4px;
    white-space: nowrap;
    border: 1px solid #767676;
    border-radius: 3px;
    background: linear-gradient(#fff, #e4e5f0);
    color: #575757;
}
.menu-bar {
    display: flex;
    flex-direction: column;
    justify-content: space-between;
    width: 17px;
    background: linear-gradient(to right, #eee, #fff);
}
.menu-bar button {
    width: 16px;
    height: 17px;
    border: 1px solid #b5b9c2;
    border-radius: 1px;
    background: linear-gradient(to right, #fff, #e6e8ee);
}
.commands {
    padding-top: 1px;
}
.commands button {
    width: 100%;
    height: 25px;
    justify-content: flex-start;
    color: #222;
}
.commands button:disabled {
    color: #a0a0a0;
}
.commands i {
    display: flex;
    align-items: center;
    justify-content: center;
    width: 25px;
    height: 25px;
    margin-right: 8px;
    border-right: 1px solid #dfe2e6;
}
.submenu {
    margin: 0 9px 0 auto;
}
.grip {
    display: flex;
    justify-content: flex-end;
    align-items: center;
    height: 11px;
    border-top: 1px solid #dfe2e6;
    background: linear-gradient(#fff, #dde1e6);
}

/* style gallery */
.styles {
    width: 515px;
}
.styles .group-body {
    padding: 5px 0 0 6px;
}
.style-gallery {
    display: flex;
    border: 1px solid #c4c8ce;
    background: #fff;
}
.style {
    width: 72px;
    height: 58px;
    flex-direction: column;
    justify-content: flex-end;
    padding: 4px 6px 5px;
}
.style.selected {
    padding: 0 2px 1px;
    border: 4px solid #fbd35f;
    border-radius: 2px;
    outline: 1px solid #c29232;
    outline-offset: -1px;
}
.style small {
    font-size: 9px;
}
.preview {
    display: flex;
    align-items: center;
    width: 100%;
    height: 32px;
    overflow: hidden;
    color: #000;
}
.heading1 {
    font-size: 25px;
    font-weight: bold;
}
.heading {
    font-family: "Liberation Serif", serif;
    font-size: 23px;
    font-weight: bold;
}
.style-scroll {
    display: flex;
    flex-direction: column;
    width: 15px;
    border-left: 1px solid #c4c8ce;
}
.style-scroll button {
    flex: 1;
}
.style-scroll button + button {
    border-top: 1px solid #c4c8ce;
}
.style-scroll .all .caret::before {
    margin-top: 2px;
}
.style-scroll .all {
    background: linear-gradient(#555, #555) center 5px / 7px 1px no-repeat;
}
.styles .big {
    width: 58px;
    padding-top: 0;
}
.editing {
    width: 69px;
}
.editing .stack {
    padding: 2px 0 0 8px;
}
.editing .small {
    height: 22px;
    gap: 3px;
}
.cloud {
    width: 62px;
}
.cloud .big {
    width: 100%;
}

/* document area */
.workspace {
    position: relative;
    flex: 1;
    min-height: 0;
    display: flex;
    overflow: hidden;
    background: linear-gradient(#cdd1d6, #b8bbc0);
}
.left-rail {
    width: 24px;
    background: #cdd1d7;
    overflow: hidden;
}
.tab-stop {
    width: 24px;
    height: 23px;
    margin: 3px 0;
    border: 1px solid #8c929b;
    background: #cdd1d7;
}
.tab-stop span {
    width: 14px;
    height: 14px;
    padding: 5px 3px 2px 4px;
    border: 1px solid #7d838c;
    background: #fff;
}
.tab-stop span::before {
    content: "";
    display: block;
    width: 5px;
    height: 5px;
    border: 2px solid #333;
    border-width: 0 0 2px 2px;
}
.v-ruler {
    width: 13px;
    margin-left: 5px;
    padding-top: 10px;
    border: 1px solid #7d838c;
    border-bottom: 0;
    background: linear-gradient(#cdd1d7 3px, #f6f6f6 3px 26px, #cdd1d7 26px 35px, #f6f6f6 35px 48px, #cdd1d7 48px 57px, #f6f6f6 57px 69px, #cdd1d7 69px 78px, #f6f6f6 78px 89px, #cdd1d7 89px 97px, #f6f6f6 97px);
}
.v-ruler span {
    display: flex;
    align-items: center;
    justify-content: center;
    height: 21px;
    writing-mode: vertical-rl;
    transform: rotate(180deg);
    font-size: 10px;
    line-height: 11px;
    color: #444;
}
.v-ruler span:nth-child(4n) {
    height: 20px;
}
.v-ruler span::after {
    content: "";
    width: 5px;
    height: 1px;
    margin-top: auto;
    background: #555;
}
.v-ruler span::before {
    content: "";
    margin-bottom: auto;
}
.canvas {
    flex: 1;
    display: flex;
    flex-direction: column;
    align-items: center;
}
.h-ruler-wrap {
    position: relative;
    width: 797px;
    padding-top: 8px;
}
.h-ruler {
    display: flex;
    height: 12px;
    overflow: hidden;
    border: 1px solid #858b94;
    background: linear-gradient(to right, #cdd1d7 119px, #f6f6f6 119px 532px, #cdd1d7 532px 547px, #f6f6f6 547px 674px, #cdd1d7 674px);
}
.h-ruler span {
    flex: none;
    width: 28px;
    text-align: center;
    font-size: 10px;
    line-height: 10px;
    color: #444;
}
.h-ruler span:first-child {
    margin-left: -6px;
}
.h-ruler .mark {
    width: 8px;
    margin: 1px 10px;
    background: repeating-linear-gradient(#666 0 1px, transparent 1px 3px), repeating-linear-gradient(to right, #666 0 1px, transparent 1px 3px);
}
.h-ruler .mark:nth-child(5) {
    margin: 1px 16px 1px 4px;
}
.indent {
    position: absolute;
    left: 116px;
    top: 5px;
}
.page {
    flex: 1;
    width: 796px;
    margin-top: 9px;
    border: 1px solid #9da3ab;
    border-bottom: 0;
    background: #fff;
    box-shadow: 0 0 8px rgba(60, 65, 75, 0.600);
}
.crop-marks {
    display: flex;
    justify-content: space-between;
    height: 5px;
    padding: 0 96px;
}
.crop-marks span {
    width: 24px;
    border-right: 1px solid #aaa;
    border-bottom: 1px solid #aaa;
}
.crop-marks span:last-child {
    border-right: 0;
    border-left: 1px solid #aaa;
}
.doc-table {
    width: 569px;
    margin-left: 112px;
    border-collapse: collapse;
    table-layout: fixed;
    font-size: 13px;
    color: #000;
}
.doc-table td {
    height: 22px;
    padding: 0 7px;
    border: 1px solid #000;
    line-height: 20px;
}
.doc-table tr:nth-child(odd) td {
    height: 21px;
}
.right-rail {
    display: flex;
    flex-direction: column;
    align-items: center;
    width: 18px;
    background: #dfe3ea;
}
.splitter {
    width: 9px;
    height: 3px;
    margin: 5px 0 1px;
    background: #777;
}
.ruler-toggle {
    width: 17px;
    height: 17px;
    border: 1px solid #858b94;
}
.scroll-up {
    height: 17px;
}
.scroll-track {
    flex: 1;
    align-self: stretch;
}
.scroll-thumb {
    height: 55%;
    margin: 0 1px;
    border: 1px solid #8a909a;
    border-radius: 1px;
    background:
        repeating-linear-gradient(#8a909a 0 1px, transparent 1px 2px) center / 7px 7px no-repeat,
        linear-gradient(to right, #fbfcfd, #dfe3e9);
}
.browse {
    display: flex;
    flex-direction: column;
    align-items: center;
    gap: 9px;
    width: 100%;
    margin-top: 5px;
    padding: 4px 0 5px;
    border-top: 1px solid #b4b8be;
}

/* floating monitor */
.monitor {
    position: absolute;
    right: 6px;
    top: 300px;
    display: flex;
    align-items: center;
}
.speeds {
    width: 78px;
    margin-right: -18px;
    padding-right: 22px;
    border-radius: 21px 0 0 21px;
    background: #2c303a;
    color: #9aa0aa;
    font-size: 10px;
}
.speeds p {
    display: flex;
    align-items: center;
    justify-content: flex-end;
    height: 21px;
    margin: 0;
}
.speeds p + p {
    border-top: 1px solid #23262e;
}
.speeds svg {
    margin: 0 auto 0 10px;
}
.speeds b {
    font-size: 12px;
    font-weight: normal;
    color: #fff;
}
.gauge {
    display: grid;
    place-items: center;
}
.gauge svg,
.gauge span {
    grid-area: 1 / 1;
}
.gauge span {
    font-size: 23px;
    font-weight: 300;
    color: #fff;
}
.gauge small {
    font-size: 10px;
    font-weight: normal;
}

/* status bar */
.status-bar {
    display: flex;
    align-items: stretch;
    height: 22px;
    padding-right: 4px;
    border-top: 1px solid #8b9097;
    background: linear-gradient(#f2f4f6, #cdd1d7 70%, #bcc0c6);
    line-height: 20px;
}
.status {
    display: flex;
    align-items: center;
    padding: 0 8px;
}
.status.end {
    padding-right: 11px;
    border-right: 1px solid #8f959d;
    box-shadow: 1px 0 #f5f6f8;
}
.views {
    display: flex;
    align-items: center;
    margin-left: auto;
    padding: 0 9px 0 3px;
    border-left: 1px solid #8f959d;
}
.views button {
    width: 18px;
    height: 19px;
}
.views .current {
    width: 20px;
    border: 1px solid #c29232;
    border-radius: 2px;
    background: #fde08a;
}
.zoom {
    display: flex;
    align-items: center;
}
.zoom span {
    margin-right: 9px;
}
.zoom button {
    width: 16px;
    height: 16px;
    border: 1px solid #6f757d;
    border-radius: 50%;
    background: #f5f6f8;
    font-size: 16px;
    font-weight: bold;
    line-height: 12px;
}
.zoom input {
    width: 100px;
    margin: 0;
    appearance: none;
    background: linear-gradient(#858b93, #858b93) center / 100% 1px no-repeat;
}
.zoom input::-webkit-slider-thumb {
    appearance: none;
    width: 9px;
    height: 12px;
    border: 1px solid #6f757d;
    border-radius: 1px 1px 4px 4px;
    background: #f5f6f8;
}

/* taskbar */
.taskbar {
    display: flex;
    height: 40px;
    background: #20362a;
    color: #fff;
}
.taskbar button {
    height: 40px;
}
.start {
    width: 48px;
}
.rule {
    align-self: center;
    width: 4px;
    height: 16px;
    margin: 0 6px;
    border: 1px solid #4e6055;
    border-width: 0 1px;
}
.apps {
    display: flex;
    margin-left: 7px;
}
.app {
    width: 49px;
    padding-bottom: 2px;
}
.app.running {
    background: linear-gradient(#76b9ed, #76b9ed) center bottom / 40px 2px no-repeat;
}
.app.recent {
    background: linear-gradient(to right, #76b9ed 31px, #4b7ea8 31px) center bottom / 40px 2px no-repeat;
}
.app.active {
    width: 48px;
    background: linear-gradient(#76b9ed, #76b9ed) bottom / 100% 2px no-repeat, #4c5f55;
}
.tray {
    display: flex;
    align-items: center;
    margin-left: auto;
}
.tray::after {
    content: "";
    width: 5px;
    height: 40px;
    margin-left: 5px;
    border-left: 1px solid #6b7a71;
}
.tray button {
    width: 24px;
}
.tray .ime {
    width: 32px;
    margin-right: 40px;
}
.tray time {
    width: 72px;
    text-align: center;
    line-height: 19px;
}
.tray .notice {
    width: 40px;
    padding-top: 4px;
    margin-left: 4px;
}
.badge {
    font: bold 12px "Open Sans", sans-serif;
    fill: #fff;
}
```
